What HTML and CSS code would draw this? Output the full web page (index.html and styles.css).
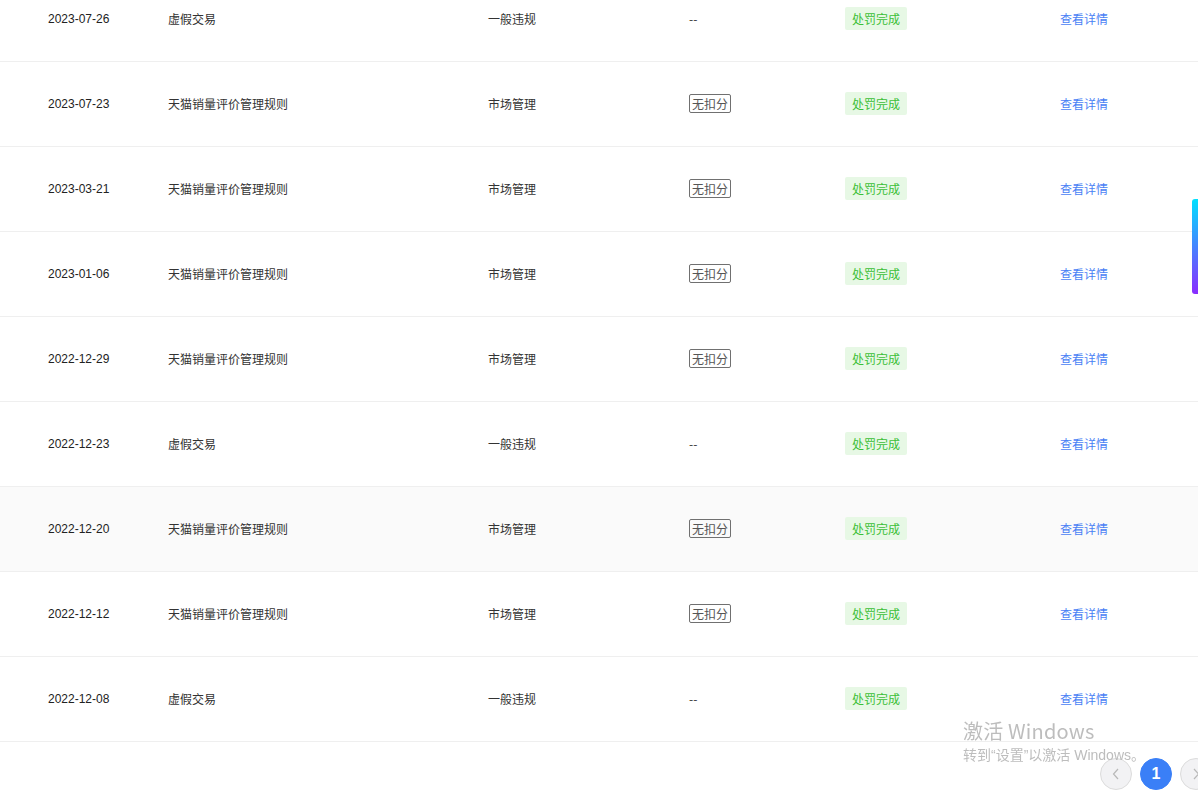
FILE: index.html
```html
<!DOCTYPE html>
<html lang="zh-CN">
<head>
<meta charset="utf-8">
<title>违规记录</title>
<link rel="stylesheet" href="styles.css">
</head>
<body>
<div class="page">
  <div class="table">
    <div class="row"><span class="date">2023-07-26</span><span>虚假交易</span><span>一般违规</span><span>--</span><span><em class="tag">处罚完成</em></span><a class="link">查看详情</a></div>
    <div class="row"><span class="date">2023-07-23</span><span>天猫销量评价管理规则</span><span>市场管理</span><span><em class="box">无扣分</em></span><span><em class="tag">处罚完成</em></span><a class="link">查看详情</a></div>
    <div class="row"><span class="date">2023-03-21</span><span>天猫销量评价管理规则</span><span>市场管理</span><span><em class="box">无扣分</em></span><span><em class="tag">处罚完成</em></span><a class="link">查看详情</a></div>
    <div class="row"><span class="date">2023-01-06</span><span>天猫销量评价管理规则</span><span>市场管理</span><span><em class="box">无扣分</em></span><span><em class="tag">处罚完成</em></span><a class="link">查看详情</a></div>
    <div class="row"><span class="date">2022-12-29</span><span>天猫销量评价管理规则</span><span>市场管理</span><span><em class="box">无扣分</em></span><span><em class="tag">处罚完成</em></span><a class="link">查看详情</a></div>
    <div class="row"><span class="date">2022-12-23</span><span>虚假交易</span><span>一般违规</span><span>--</span><span><em class="tag">处罚完成</em></span><a class="link">查看详情</a></div>
    <div class="row hover"><span class="date">2022-12-20</span><span>天猫销量评价管理规则</span><span>市场管理</span><span><em class="box">无扣分</em></span><span><em class="tag">处罚完成</em></span><a class="link">查看详情</a></div>
    <div class="row"><span class="date">2022-12-12</span><span>天猫销量评价管理规则</span><span>市场管理</span><span><em class="box">无扣分</em></span><span><em class="tag">处罚完成</em></span><a class="link">查看详情</a></div>
    <div class="row"><span class="date">2022-12-08</span><span>虚假交易</span><span>一般违规</span><span>--</span><span><em class="tag">处罚完成</em></span><a class="link">查看详情</a></div>
  </div>
  <div class="pager">
    <button class="pg"><svg width="10" height="12" viewBox="0 0 10 12"><path d="M7 1 L2.5 6 L7 11" fill="none" stroke="#b8b8b8" stroke-width="1.2"/></svg></button>
    <button class="pg active">1</button>
    <button class="pg"><svg width="10" height="12" viewBox="0 0 10 12"><path d="M3 1 L7.5 6 L3 11" fill="none" stroke="#b8b8b8" stroke-width="1.2"/></svg></button>
  </div>
</div>
<div class="scroll-thumb"></div>
<div class="activate">
  <div class="a1">激活 Windows</div>
  <div class="a2">转到“设置”以激活 Windows。</div>
</div>
</body>
</html>
```
FILE: styles.css
```css
* { box-sizing: border-box; }
html, body { margin: 0; padding: 0; }
body {
  width: 1198px;
  height: 796px;
  overflow: hidden;
  background: #fff;
  font-family: "Noto Sans CJK SC", "Microsoft YaHei", sans-serif;
  font-size: 12px;
  color: #333;
}
.page { margin-top: -23px; }
.table { display: flex; flex-direction: column; }
.row {
  display: grid;
  grid-template-columns: 120px 320px 201px 156px 215px 1fr;
  align-items: center;
  height: 85px;
  padding-left: 48px;
  padding-bottom: 1px;
  border-bottom: 1px solid #efefef;
  line-height: 18px;
}
.row.hover { background: #fafafa; }
.row span { white-space: nowrap; }
.date { font-family: "Liberation Sans", Arial, sans-serif; color: #222; }
.box {
  font-style: normal;
  display: inline-block;
  border: 1px solid #707070;
  border-radius: 2px;
  padding: 0 2px;
  line-height: 17px;
  color: #555;
}
.tag {
  font-style: normal;
  display: inline-block;
  background: #e7f8e5;
  color: #3bbf37;
  padding: 0 7px;
  border-radius: 2px;
  line-height: 23px;
}
.link { color: #4a7ff5; cursor: pointer; }
.pager {
  display: flex;
  justify-content: flex-end;
  gap: 8px;
  padding-top: 16px;
  margin-right: -14px;
}
.pg {
  width: 32px;
  height: 32px;
  border-radius: 50%;
  border: 1px solid #dcdcdc;
  background: #f2f2f4;
  display: flex;
  align-items: center;
  justify-content: center;
  padding: 0;
  font-family: "Liberation Sans", Arial, sans-serif;
  font-size: 16px;
  font-weight: bold;
  color: #fff;
}
.pg.active { background: #3a7ff7; border-color: #3a7ff7; }
.scroll-thumb {
  position: fixed;
  right: 0;
  top: 199px;
  width: 6px;
  height: 95px;
  border-radius: 3px 0 0 3px;
  background: linear-gradient(180deg, #00e1ff 0%, #4d7bff 55%, #8a2cff 100%);
}
.activate {
  position: fixed;
  left: 963px;
  top: 717px;
  color: #bdbdbd;
  font-family: "Noto Sans CJK SC", sans-serif;
  pointer-events: none;
}
.a1 { font-size: 20px; line-height: 28px; letter-spacing: 0.2px; }
.a2 {
  font-size: 14px;
  line-height: 20px;
  font-family: "Liberation Sans", "Noto Sans CJK SC", sans-serif;
}
```
